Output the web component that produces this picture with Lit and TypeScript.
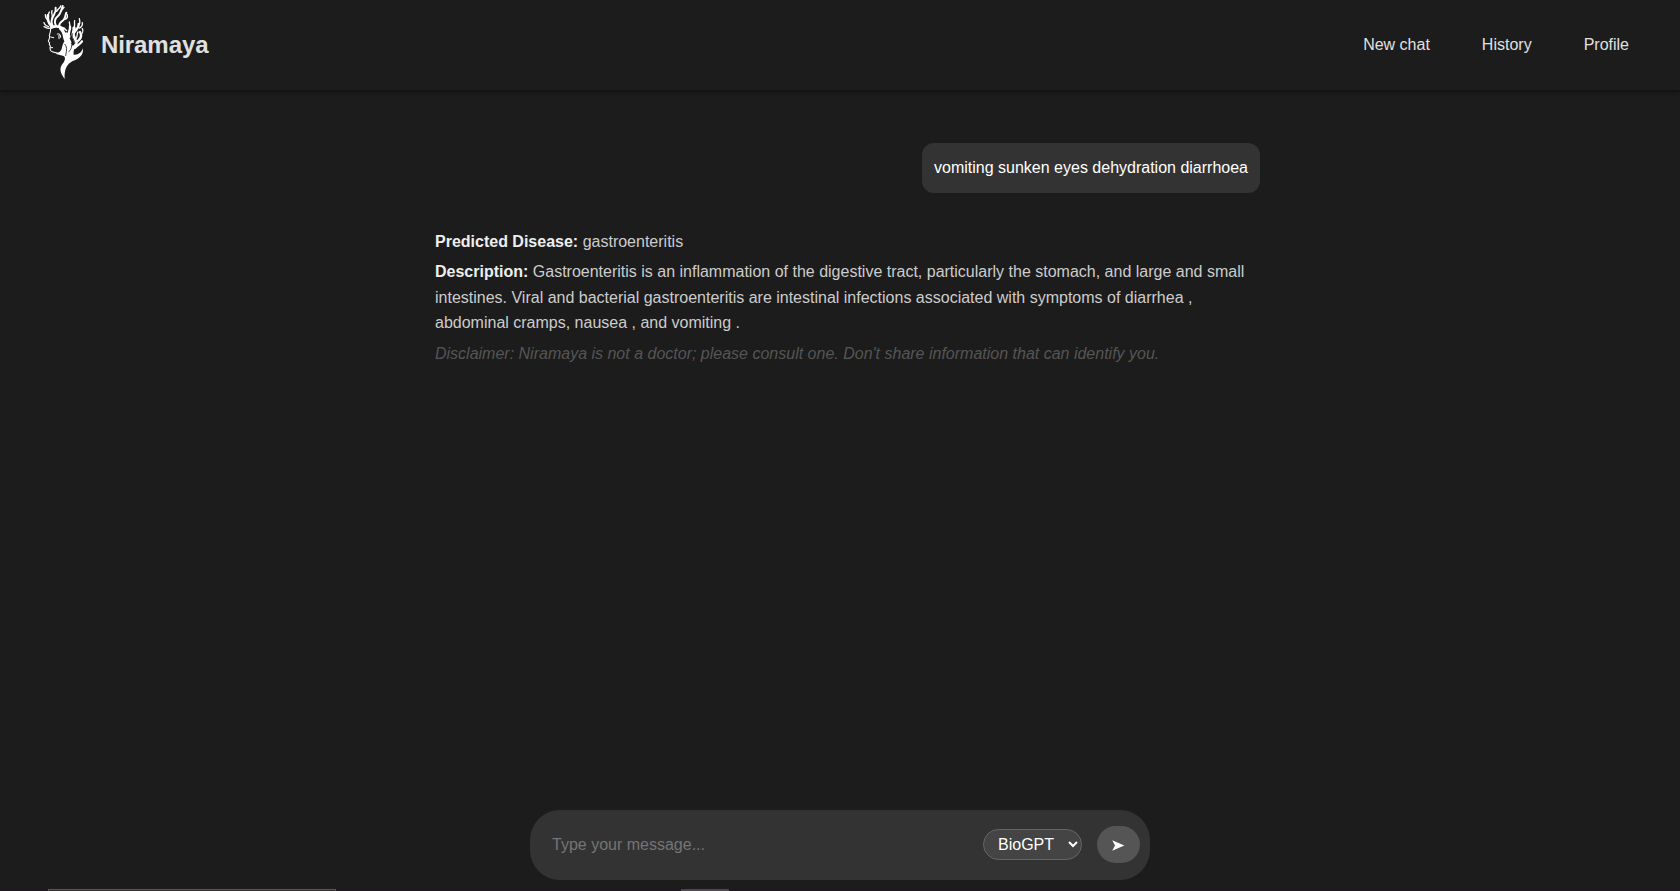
import { LitElement, html, css, svg } from "lit";
import { customElement } from "lit/decorators.js";

const logo = svg`
  <g fill="none" stroke="#fff" stroke-linecap="round" stroke-linejoin="round">
    <path stroke-width="8" d="M64 83C76 77 88 78 100 86M64 78C54 68 52 58 54 46"/>
    <path stroke-width="6" d="M68 78C60 66 66 54 72 44C77 35 78 28 77 23M78 78C72 66 74 56 84 48C92 41 94 30 98 18M88 78C86 68 96 66 102 58C106 52 106 46 109 38"/>
    <path stroke-width="4" d="M56 80C48 78 44 76 42 68M54 60C48 56 46 50 46 44M54 46L58 36M66 54C70 46 62 40 66 32M80 34C84 26 90 26 92 18M94 32L102 22M102 58C110 58 114 52 112 44M62 84C52 88 48 82 42 80"/>
    <path stroke-width="3.2" d="M62 86C62 94 60 100 58 106C60 110 60 113 55 123C54 127 59 126 59 128L58 134L61 138C59 146 61 153 67 155C74 158 80 158 86 160"/>
    <path stroke-width="3" d="M62 111L71 113M82 102C90 100 92 104 92 112M87 106V116M62 143H68"/>
    <path stroke-width="10" d="M92 86C104 94 102 108 106 118C110 130 118 134 118 148M110 102C106 112 124 122 122 144M134 142C146 130 132 118 130 106C128 98 134 92 132 84"/>
    <path stroke-width="7" d="M118 110C112 98 122 90 120 80M140 126C154 116 156 106 150 96M134 96C140 84 146 88 146 72M124 148C136 142 150 132 156 124"/>
    <path stroke-width="4" d="M120 80L118 66M132 84C136 76 132 70 134 62M146 76C150 72 150 64 148 56M148 84C154 82 158 78 157 68M152 104C158 100 160 92 157 86M138 116C144 108 140 100 144 96M110 92L102 84"/>
  </g>
  <path fill="#fff" d="M76 161C98 156 94 144 99 132C102 122 108 120 114 126L122 138L138 134C132 148 130 154 131 164C142 166 154 160 159 145C161 166 146 178 128 183C112 192 102 206 104 237C90 218 87 204 99 190C108 178 106 168 98 167Z"/>
  <path fill="none" stroke="#1c1c1c" stroke-width="2.5" d="M104 132C114 144 108 156 107 168M124 128C128 144 120 150 116 156M128 100C122 112 136 122 134 132"/>`;

@customElement("chat-header")
class ChatHeader extends LitElement {
  static styles = css`
    :host { display: flex; align-items: center; justify-content: space-between; height: 90px; flex: none; padding: 0 51px 0 30px; background: #1c1c1c; box-shadow: 0 2px 4px rgba(0,0,0,.4); }
    .brand { display: flex; align-items: center; gap: 1px; }
    .logo { width: 70px; height: 84px; margin-top: -6px; }
    .name { font-size: 24px; line-height: 28px; font-weight: 700; letter-spacing: -.08px; color: #e0e0e0; margin: 0; }
    nav { display: flex; gap: 52px; }
    a { color: #e0e0e0; font-size: 16px; line-height: 18px; }
  `;
  render() {
    return html`<div class="brand"><svg class="logo" viewBox="0 0 210 252">${logo}</svg><h1 class="name">Niramaya</h1></div>
      <nav><a>New chat</a><a>History</a><a>Profile</a></nav>`;
  }
}

@customElement("chat-composer")
class ChatComposer extends LitElement {
  static styles = css`
    :host { display: flex; align-items: center; box-sizing: border-box; width: 620px; height: 70px; border-radius: 30px; background: #333; padding: 0 10px 0 22px; }
    input { flex: 1; min-width: 0; border: 0; outline: 0; padding: 0; background: none; color: #fff; font: 16px "Liberation Sans", Arial, sans-serif; }
    input::placeholder { color: #757575; }
    select { width: 99px; height: 31px; box-sizing: border-box; padding: 0 0 0 10px; border: 1px solid #666; border-radius: 16px; background: #444; color: #fff; font: 16px "Liberation Sans", Arial, sans-serif; margin: 0 15px 2px 0; }
    button { display: grid; place-items: center; width: 43px; height: 37px; border: 0; padding: 0; margin: 0 0 2px; border-radius: 20px; background: #555; }
    svg { width: 43px; height: 37px; }
  `;
  render() {
    return html`<input placeholder="Type your message..." /><select><option>BioGPT</option></select>
      <button aria-label="Send"><svg viewBox="0 0 43 37"><path fill="#fff" d="M15.2 14.3L27.3 19.5L15.2 24.7L18 19.5Z"/></svg></button>`;
  }
}

@customElement("app-root")
class AppRoot extends LitElement {
  static styles = css`
    :host { display: flex; flex-direction: column; height: 891px; overflow: hidden; background: #1c1c1c; font: 16px "Liberation Sans", Arial, sans-serif; }
    main { flex: 1; box-sizing: border-box; width: 840px; margin: 0 auto; padding-top: 53px; display: flex; flex-direction: column; }
    .question { align-self: flex-end; box-sizing: border-box; height: 50px; padding: 12px; border-radius: 12px; background: #333; color: #fff; line-height: 25.6px; }
    .answer { margin-top: 35.6px; padding: 0 15px; color: #ccc; line-height: 25.6px; }
    p { margin: 0 0 5px; }
    strong { color: #eee; }
    .note { color: #555; font-style: italic; }
    chat-composer { align-self: center; margin-bottom: 9px; }
    .edge { display: flex; flex: none; height: 2px; background: #1d1722; }
    .task { box-sizing: border-box; width: 288px; margin-left: 48px; background: #332e30; border: 1px solid #5a5656; border-bottom: 0; }
    .active { width: 48px; margin-left: 345px; background: #4b474c; }
  `;
  render() {
    return html`<chat-header></chat-header>
      <main>
        <div class="question">vomiting sunken eyes dehydration diarrhoea</div>
        <div class="answer">
          <p><strong>Predicted Disease:</strong> gastroenteritis</p>
          <p><strong>Description:</strong> Gastroenteritis is an inflammation of the digestive tract, particularly the stomach, and large and small intestines. Viral and bacterial gastroenteritis are intestinal infections associated with symptoms of diarrhea , abdominal cramps, nausea , and vomiting .</p>
          <p class="note">Disclaimer: Niramaya is not a doctor; please consult one. Don't share information that can identify you.</p>
        </div>
      </main>
      <chat-composer></chat-composer>
      <div class="edge"><div class="task"></div><div class="active"></div></div>`;
  }
}
